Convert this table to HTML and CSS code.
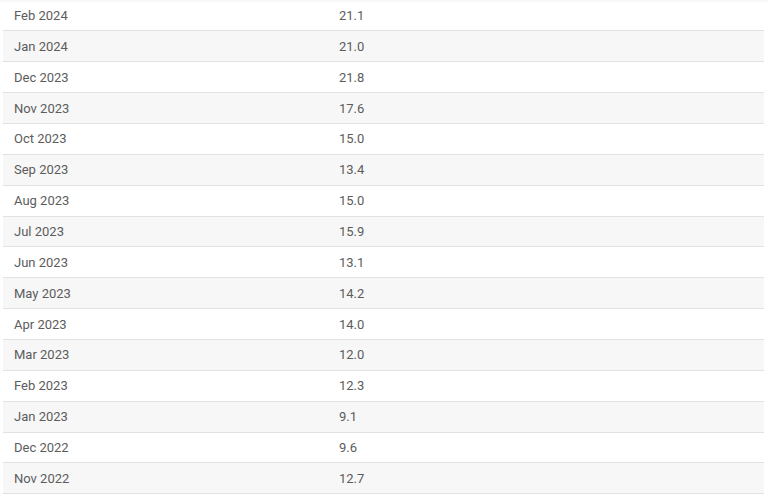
FILE: index.html
```html
<!DOCTYPE html>
<html>
<head>
<meta charset="utf-8">
<link rel="stylesheet" href="styles.css">
</head>
<body>
<div class="wrap">
<table class="data">
<colgroup><col class="col-date"><col class="col-val"></colgroup>
<tbody>
<tr><td>Feb 2024</td><td>21.1</td></tr>
<tr><td>Jan 2024</td><td>21.0</td></tr>
<tr><td>Dec 2023</td><td>21.8</td></tr>
<tr><td>Nov 2023</td><td>17.6</td></tr>
<tr><td>Oct 2023</td><td>15.0</td></tr>
<tr><td>Sep 2023</td><td>13.4</td></tr>
<tr><td>Aug 2023</td><td>15.0</td></tr>
<tr><td>Jul 2023</td><td>15.9</td></tr>
<tr><td>Jun 2023</td><td>13.1</td></tr>
<tr><td>May 2023</td><td>14.2</td></tr>
<tr><td>Apr 2023</td><td>14.0</td></tr>
<tr><td>Mar 2023</td><td>12.0</td></tr>
<tr><td>Feb 2023</td><td>12.3</td></tr>
<tr><td>Jan 2023</td><td>9.1</td></tr>
<tr><td>Dec 2022</td><td>9.6</td></tr>
<tr><td>Nov 2022</td><td>12.7</td></tr>
</tbody>
</table>
</div>
</body>
</html>
```
FILE: styles.css
```css
html, body {
  margin: 0;
  padding: 0;
  background: #ffffff;
}
body {
  font-family: Roboto, "Liberation Sans", sans-serif;
  overflow: hidden;
}
.wrap {
  padding: 0 4px 0 3px;
  box-shadow: inset 0 3px 3px -2px rgba(0,0,0,0.06);
}
.data {
  width: 100%;
  table-layout: fixed;
  border-collapse: collapse;
  font-size: 13px;
  color: #5c5c5c;
}
.col-date {
  width: 325px;
}
.data tr {
  height: 30.87px;
  border-bottom: 1px solid #e2e2e2;
}
.data tr:nth-child(even) {
  background: #f7f7f7;
}
.data td {
  padding: 0 0 0 11px;
  vertical-align: middle;
  line-height: 15px;
}
```
